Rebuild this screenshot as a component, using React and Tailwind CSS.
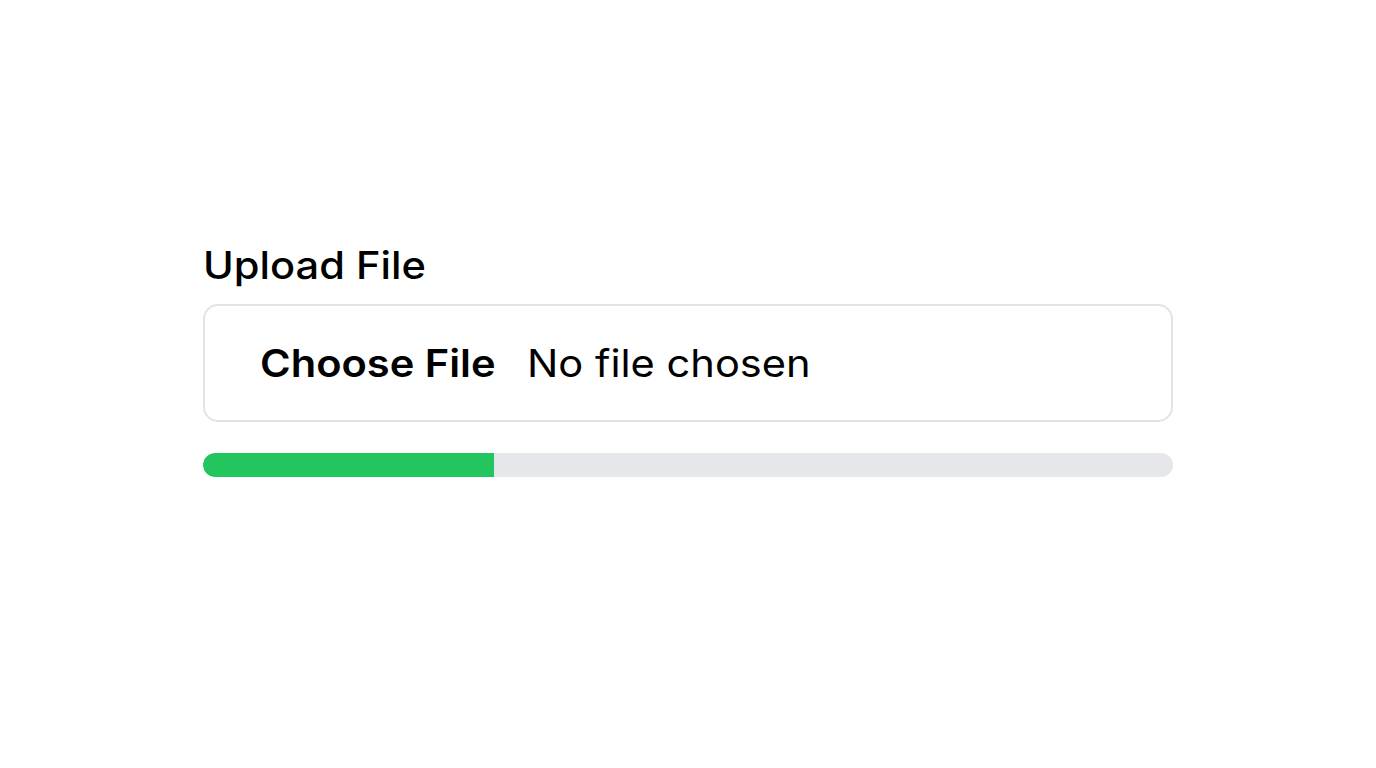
import React from "react";

const App = () => {
    const progress = 30;

    return (
        <div className="min-h-screen bg-white pt-[242px] font-['Inter',sans-serif] text-black">
            <div className="mx-auto w-[970px]">
                <label className="block text-[38px] leading-[46px] font-medium mb-[16px]">
                    <span className="inline-block origin-left scale-x-[1.095]">Upload File</span>
                </label>
                <div className="flex items-center h-[118px] border-2 border-[#e2e3e6] rounded-[15px] pl-[55px]">
                    <span className="inline-block origin-left scale-x-[1.095] text-[38px] font-semibold leading-[46px]">
                        Choose File
                    </span>
                    <span className="inline-block origin-left scale-x-[1.095] text-[38px] leading-[46px] ml-[52px]">
                        No file chosen
                    </span>
                </div>
                <div className="mt-[31px] h-[24px] w-full rounded-full bg-[#e5e7eb] overflow-hidden">
                    <div className="h-full bg-[#22c55e] rounded-l-full" style={{ width: `${progress}%` }} />
                </div>
            </div>
        </div>
    );
};

export default App;
